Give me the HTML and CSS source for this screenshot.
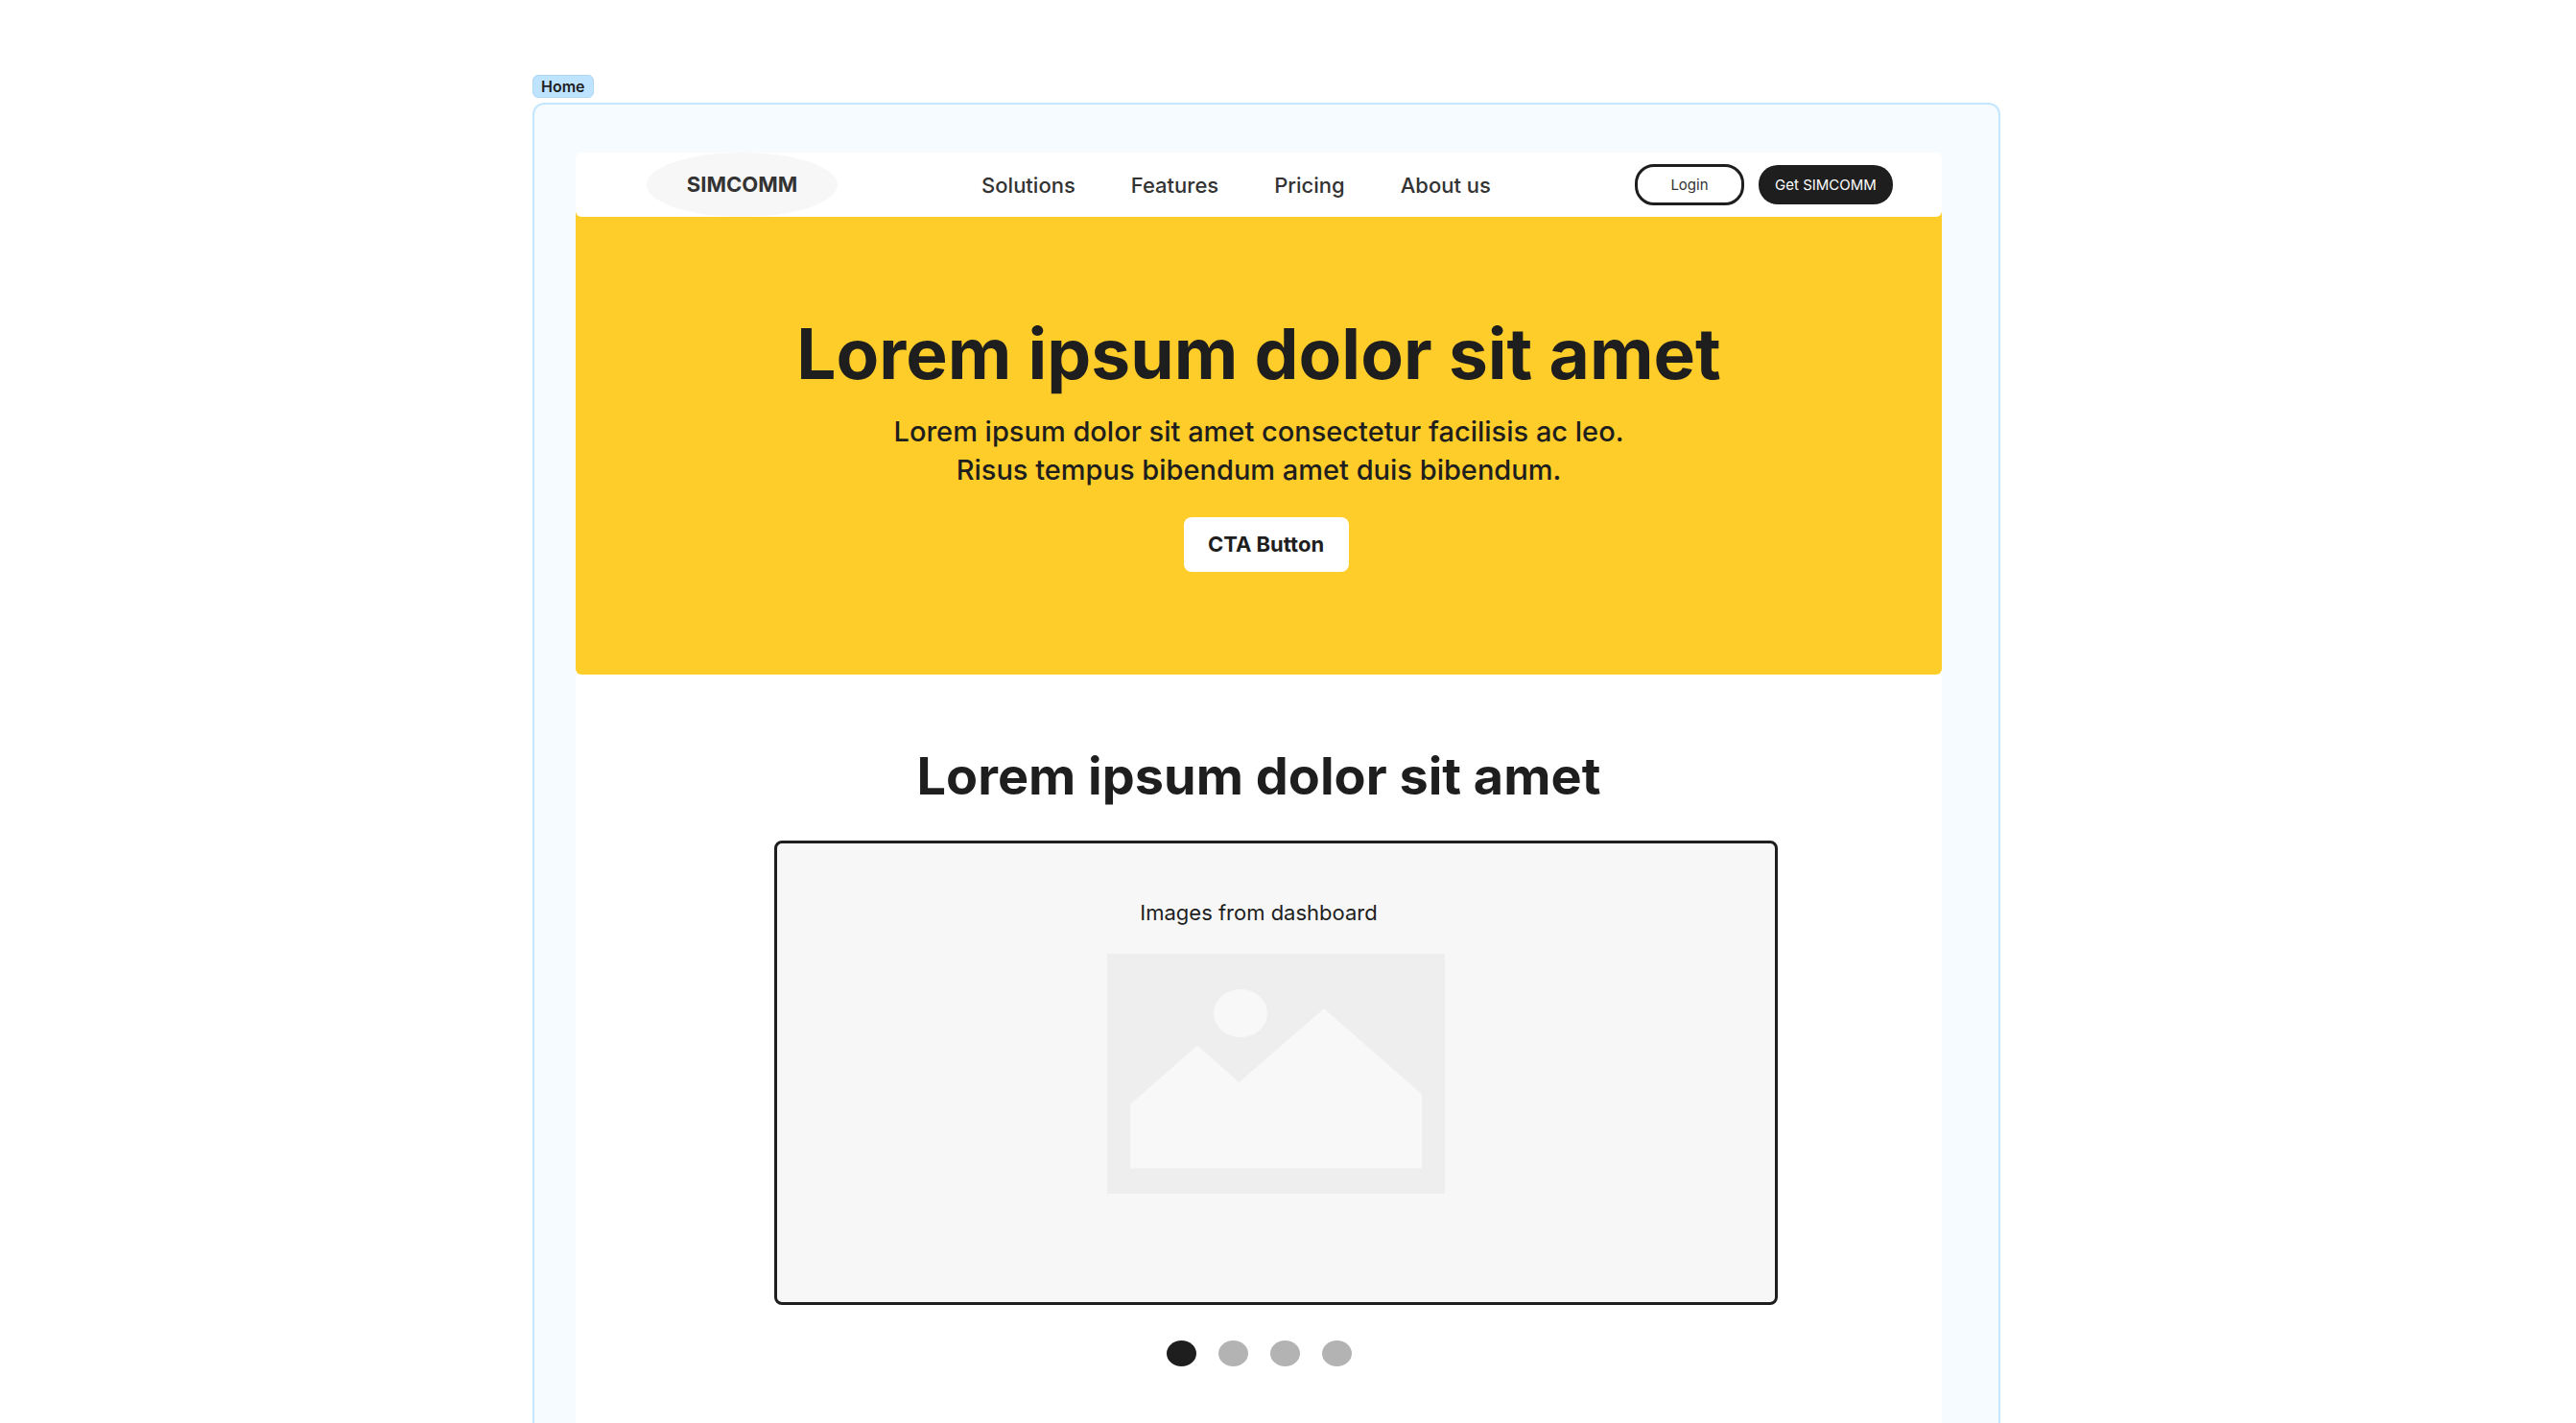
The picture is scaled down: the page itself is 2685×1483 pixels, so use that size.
FILE: index.html
```html
<!DOCTYPE html>
<html lang="en">
<head>
<meta charset="utf-8">
<meta name="viewport" content="width=device-width, initial-scale=1">
<title>SIMCOMM – Home</title>
<link rel="stylesheet" href="styles.css">
</head>
<body>
<div class="canvas">
  <div class="artboard">
    <span class="artboard-label">Home</span>
    <div class="frame">
      <div class="page">
        <header class="topbar">
          <a class="logo" href="#">SIMCOMM</a>
          <nav class="links">
            <a href="#">Solutions</a>
            <a href="#">Features</a>
            <a href="#">Pricing</a>
            <a href="#">About us</a>
          </nav>
          <div class="actions">
            <button class="btn btn-outline" type="button">Login</button>
            <button class="btn btn-dark" type="button">Get SIMCOMM</button>
          </div>
        </header>
        <main class="content">
          <section class="hero">
            <h1>Lorem ipsum dolor sit amet</h1>
            <p>Lorem ipsum dolor sit amet consectetur facilisis ac leo.<br>Risus tempus bibendum amet duis bibendum.</p>
            <button class="cta" type="button">CTA Button</button>
          </section>
          <section class="showcase">
            <h2>Lorem ipsum dolor sit amet</h2>
            <figure class="slide">
              <figcaption>Images from dashboard</figcaption>
              <svg class="placeholder" viewBox="0 0 352 250" role="img" aria-label="Image placeholder">
                <rect width="352" height="250" fill="#eeeeee"/>
                <ellipse cx="139" cy="62" rx="28" ry="25" fill="#f8f8f8"/>
                <path d="M24 157 94 95.500 137.500 134 226 57 328 146.500V223.500H24Z" fill="#f8f8f8"/>
              </svg>
            </figure>
            <div class="dots">
              <button class="dot dot-active" type="button" aria-label="Slide 1"></button>
              <button class="dot" type="button" aria-label="Slide 2"></button>
              <button class="dot" type="button" aria-label="Slide 3"></button>
              <button class="dot" type="button" aria-label="Slide 4"></button>
            </div>
          </section>
        </main>
      </div>
    </div>
  </div>
</div>
</body>
</html>
```
FILE: styles.css
```css
* {
  box-sizing: border-box;
}

body {
  margin: 0;
  background: #ffffff;
  color: #1e1e1e;
  font-family: Inter, "Liberation Sans", sans-serif;
}

h1, h2, p, figure {
  margin: 0;
}

a {
  color: inherit;
  text-decoration: none;
}

button {
  padding: 0;
  border: 0;
  color: inherit;
  font-family: inherit;
  cursor: pointer;
}

.canvas {
  display: grid;
  grid-template-columns: 555fr 1530fr 600fr;
  min-height: 100vh;
  padding-top: 78px;
}

.artboard {
  grid-column: 2;
  display: flex;
  flex-direction: column;
  align-items: flex-start;
  gap: 5px;
}

.artboard-label {
  padding: 0 8px;
  border: 1px solid #aed7f4;
  border-radius: 6px;
  background: #bde3ff;
  font-size: 16px;
  font-weight: 600;
  line-height: 22px;
}

.frame {
  flex: 1;
  display: flex;
  width: 100%;
  padding: 50px 59px 0 43px;
  border: 2px solid #c4e7ff;
  border-bottom: 0;
  border-radius: 12px 12px 0 0;
  background: #f5fbff;
}

.page {
  flex: 1;
  border-radius: 6px 6px 0 0;
  background: #ffffff;
}

.topbar {
  position: relative;
  display: flex;
  align-items: center;
  justify-content: space-between;
  padding: 0 51px 0 74px;
  border-radius: 6px;
  background: #ffffff;
  color: #333333;
}

.logo {
  width: 199px;
  border-radius: 50%;
  background: #f7f7f7;
  font-size: 22px;
  font-weight: 700;
  line-height: 67px;
  text-align: center;
}

.links {
  display: flex;
  gap: 58px;
  font-size: 22px;
  font-weight: 500;
  line-height: 28px;
}

.actions {
  display: flex;
  align-items: center;
  gap: 15px;
}

.btn {
  border-radius: 20px;
  font-size: 15px;
  line-height: 41px;
}

.btn-outline {
  width: 114px;
  border: 3px solid #1e1e1e;
  background: #ffffff;
  line-height: 37px;
}

.btn-dark {
  width: 140px;
  background: #1e1e1e;
  color: #ffffff;
}

.hero {
  display: flex;
  flex-direction: column;
  align-items: center;
  margin-top: -6px;
  padding: 104px 0 107px;
  border-radius: 0 0 6px 6px;
  background: #ffcd29;
  text-align: center;
}

.hero h1 {
  font-size: 73px;
  font-weight: 700;
  line-height: 90px;
}

.hero p {
  margin-top: 16px;
  font-size: 29px;
  font-weight: 500;
  line-height: 40px;
}

.cta {
  width: 172px;
  margin: 29px 0 0 15px;
  border-radius: 8px;
  background: #ffffff;
  font-size: 22px;
  font-weight: 700;
  line-height: 57px;
}

.showcase {
  display: grid;
  grid-template-columns: 207fr 1046fr 171fr;
  padding-top: 72px;
}

.showcase h2 {
  grid-column: 1 / -1;
  font-size: 54px;
  font-weight: 700;
  line-height: 68px;
  text-align: center;
}

.slide {
  grid-column: 2;
  display: flex;
  flex-direction: column;
  align-items: center;
  gap: 28px;
  margin-top: 33px;
  padding: 57px 0 113px;
  border: 3px solid #1e1e1e;
  border-radius: 8px;
  background: #f7f7f7;
}

.slide figcaption {
  padding-right: 36px;
  font-size: 22px;
  line-height: 30px;
}

.placeholder {
  display: block;
  width: 352px;
}

.dots {
  grid-column: 1 / -1;
  display: flex;
  justify-content: center;
  gap: 23px;
  margin-top: 37px;
}

.dot {
  width: 31px;
  height: 27px;
  border-radius: 50%;
  background: #b3b3b3;
}

.dot-active {
  background: #1e1e1e;
}
```
